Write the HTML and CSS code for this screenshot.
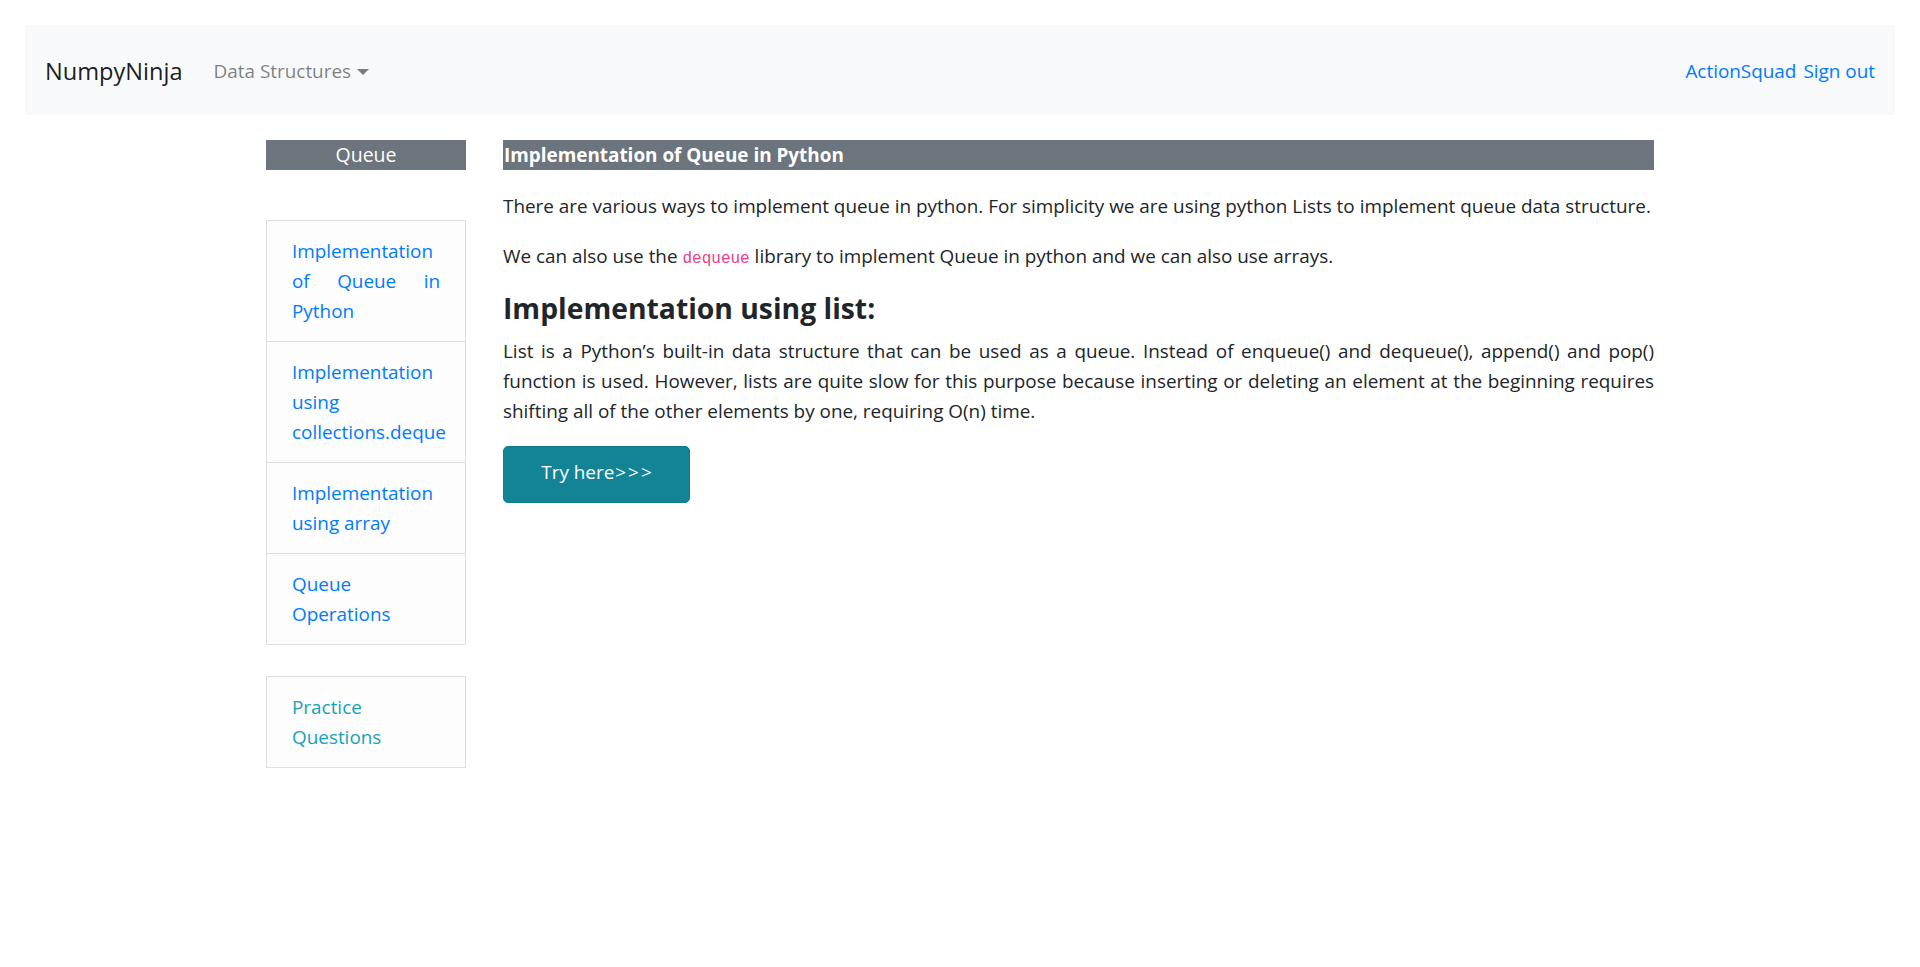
FILE: index.html
```html
<!DOCTYPE html>
<html lang="en">
<head>
<meta charset="utf-8">
<title>Queue - NumpyNinja</title>
<link rel="stylesheet" href="styles.css">
</head>
<body>
<nav class="navbar">
  <a class="brand" href="#">NumpyNinja</a>
  <a class="nav-dropdown" href="#">Data Structures<span class="caret"></span></a>
  <div class="nav-right">
    <a href="#">ActionSquad</a>
    <a href="#">Sign out</a>
  </div>
</nav>
<div class="container">
  <aside class="sidebar">
    <div class="side-title">Queue</div>
    <ul class="list-group">
      <li class="list-item"><a href="#">Implementation of Queue in Python</a></li>
      <li class="list-item"><a href="#">Implementation using collections.deque</a></li>
      <li class="list-item"><a href="#">Implementation using array</a></li>
      <li class="list-item"><a href="#">Queue Operations</a></li>
    </ul>
    <ul class="list-group practice">
      <li class="list-item"><a class="info" href="#">Practice Questions</a></li>
    </ul>
  </aside>
  <main class="content">
    <div class="content-title">Implementation of Queue in Python</div>
    <p>There are various ways to implement queue in python. For simplicity we are using python Lists to implement queue data structure.</p>
    <p>We can also use the <code>dequeue</code> library to implement Queue in python and we can also use arrays.</p>
    <h4 class="section-heading">Implementation using list:</h4>
    <p class="justify">List is a Python’s built-in data structure that can be used as a queue. Instead of enqueue() and dequeue(), append() and pop() function is used. However, lists are quite slow for this purpose because inserting or deleting an element at the beginning requires shifting all of the other elements by one, requiring O(n) time.</p>
    <a class="btn-try" href="#">Try here<span class="arrows">&gt;&gt;&gt;</span></a>
  </main>
</div>
</body>
</html>
```
FILE: styles.css
```css
* { box-sizing: border-box; }
body {
  margin: 0;
  padding: 25px 25px 0 25px;
  font-family: "Open Sans", "Noto Sans", sans-serif;
  font-size: 18.9px;
  line-height: 30px;
  color: #212529;
  background: #fff;
}
a { text-decoration: none; }

.navbar {
  height: 90px;
  background: #f8f9fa;
  display: flex;
  align-items: center;
  padding: 2px 20px 0 20px;
}
.brand {
  font-size: 23.6px;
  color: rgba(0,0,0,.9);
  margin-right: 31px;
  line-height: 36px;
}
.nav-dropdown {
  color: rgba(0,0,0,.5);
  display: flex;
  align-items: center;
}
.caret {
  display: inline-block;
  width: 0;
  height: 0;
  margin-left: 6px;
  margin-top: 2px;
  border-top: 6px solid rgba(0,0,0,.5);
  border-left: 6px solid transparent;
  border-right: 6px solid transparent;
}
.nav-right {
  margin-left: auto;
  display: flex;
  gap: 7px;
}
.nav-right a { color: #007bff; }

.container {
  width: 1388px;
  margin: 25px auto 0;
  display: flex;
  gap: 37px;
  align-items: flex-start;
}
.sidebar {
  width: 200px;
  flex: none;
}
.side-title {
  height: 30px;
  line-height: 30px;
  background: #6c757d;
  color: #fff;
  text-align: center;
  font-size: 19.5px;
}
.list-group {
  list-style: none;
  margin: 50px 0 0;
  padding: 0;
  border: 1px solid #dfdfdf;
  background: #fdfdfd;
}
.list-group.practice { margin-top: 31px; }
.list-item {
  padding: 15px 25px;
  text-align: justify;
  border-top: 1px solid #dfdfdf;
}
.list-item:first-child { border-top: 0; }
.list-item a { color: #007bff; }
.list-item a.info { color: #17a2b8; }

.content {
  flex: 1;
  min-width: 0;
}
.content-title {
  height: 30px;
  line-height: 30px;
  background: #6c757d;
  color: #fff;
  font-weight: 700;
  padding-left: 1px;
  margin-bottom: 21px;
}
.content p {
  margin: 0 0 20px;
}
.content p.justify { text-align: justify; }
code {
  font-family: "Liberation Mono", monospace;
  font-size: 16px;
  color: #e83e8c;
}
.section-heading {
  font-size: 28.3px;
  line-height: 29px;
  font-weight: 700;
  margin: 0 0 13px;
}
.btn-try {
  display: inline-block;
  width: 187px;
  padding: 11px 0 15px;
  text-align: center;
  color: #fff;
  background: #138496;
  border: 1px solid #117a8b;
  border-radius: 5px;
  line-height: 29px;
}
.arrows {
  letter-spacing: 2px;
  margin-left: 1px;
  margin-right: -2px;
}
```
